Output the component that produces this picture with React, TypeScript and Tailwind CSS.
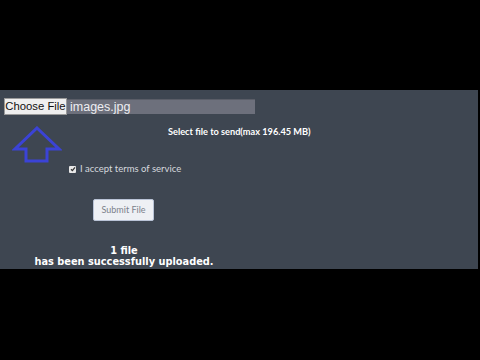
import React from 'react';

const ArrowUp = () => (
  <svg width="50" height="37" viewBox="0 0 50 37" fill="none">
    <path
      d="M25 2 L47 23 L35 23 L35 35 L14 35 L14 23 L3 23 Z"
      stroke="#3b43d6"
      strokeWidth="3"
      strokeLinejoin="miter"
    />
  </svg>
);

const App: React.FC = () => {
  return (
    <div className="w-[480px] h-[360px] bg-black flex flex-col">
      <div className="h-[90px] shrink-0" />
      <div className="h-[179px] w-[478px] bg-[#3e4651] shrink-0 flex flex-col">
        {/* file picker */}
        <div className="flex items-center pt-[8px] pl-[4px]">
          <button className="h-[17px] w-[63px] px-0 whitespace-nowrap bg-[#efefef] border border-[#9a9a9a] text-[11.3px] text-[#111] leading-none font-['Liberation_Sans',sans-serif] flex items-center justify-center">
            Choose File
          </button>
          <div className="h-[15px] w-[188px] bg-[#6d707c] border-t border-[#5a5d67] text-[12.5px] leading-none text-[#eeeef2] font-['Liberation_Sans',sans-serif] flex items-center pl-[3px]">
            images.jpg
          </div>
        </div>

        {/* arrow + heading */}
        <div className="flex items-start pl-[12px] pt-[11px]">
          <ArrowUp />
          <div className="ml-[106px] -mt-[1px] text-[9.2px] font-bold text-white font-['Lato',sans-serif]">
            Select file to send(max 196.45 MB)
          </div>
        </div>

        {/* terms */}
        <div className="flex items-center pl-[69px] mt-[-1px]">
          <span className="w-[7px] h-[7px] bg-[#e8e8e8] rounded-[1px] flex items-center justify-center">
            <svg width="6" height="6" viewBox="0 0 6 6">
              <path d="M1 3.2 L2.4 4.6 L5 1.4" stroke="#333" strokeWidth="1.3" fill="none" />
            </svg>
          </span>
          <span className="ml-[4px] text-[9.5px] text-[#d6d9de] font-['Lato',sans-serif]">
            I accept terms of service
          </span>
        </div>

        {/* submit */}
        <div className="pl-[93px] mt-[19px]">
          <button className="h-[22px] w-[61px] bg-[#eef0f4] border border-[#b9c3d6] rounded-[2px] text-[9px] text-[#7b808a] font-['Lato',sans-serif]">
            Submit File
          </button>
        </div>

        {/* status */}
        <div className="w-[248px] mt-[24px] flex flex-col items-center text-white font-bold text-[9.8px] leading-[11px] font-['DejaVu_Sans',sans-serif]">
          <span>1 file</span>
          <span>has been successfully uploaded.</span>
        </div>
      </div>
    </div>
  );
};

export default App;
